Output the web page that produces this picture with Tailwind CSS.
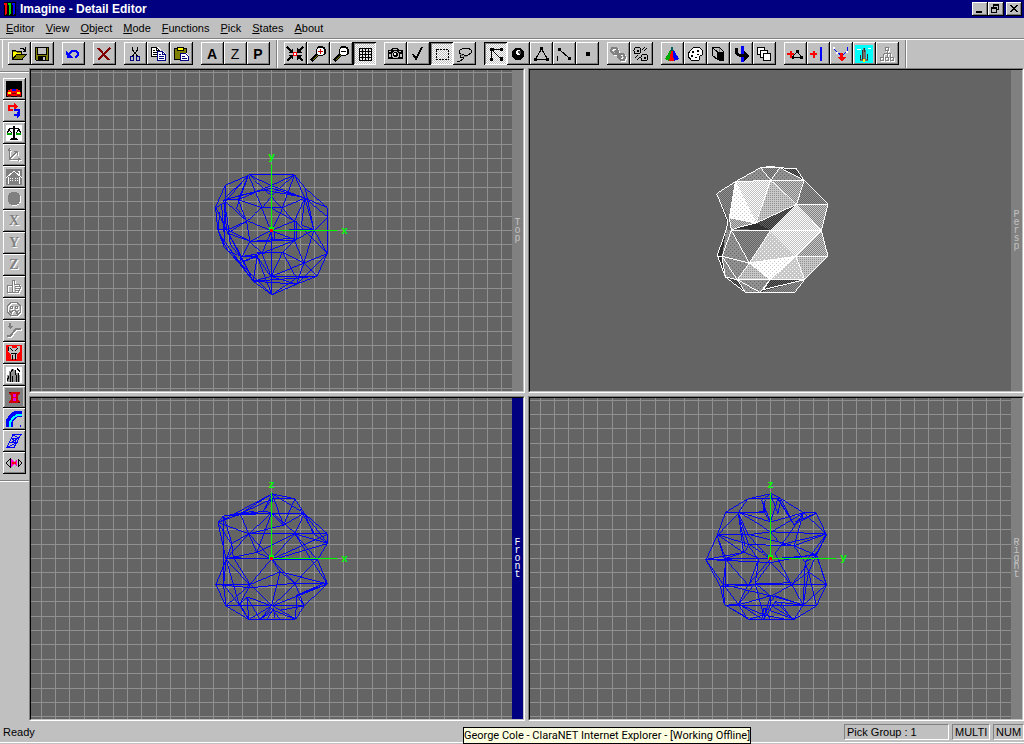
<!DOCTYPE html>
<html lang="en">
<head>
<meta charset="utf-8">
<title>Imagine - Detail Editor</title>
<script src="https://cdn.jsdelivr.net/npm/@tailwindcss/browser@4"></script>
</head>
<body class="relative flex h-screen flex-col overflow-hidden bg-[#c0c0c0] font-['Liberation_Sans',Arial,sans-serif] text-[11px] text-black">

<header class="flex h-[18px] shrink-0 items-center bg-[#000080] pl-1 pr-[2px]">
  <svg class="h-4 w-3" viewBox="0 0 12 16" shape-rendering="crispEdges" aria-hidden="true">
    <path d="M0 1h12v14H0z" fill="#000"/>
    <path d="M0 2h3v11H2v1H1V4H0z" fill="#f00"/><path d="M4 2h3v11H6v1H5V4H4z" fill="#0d0"/><path d="M8 2h3v11h-1v1H9V4H8z" fill="#00f"/>
  </svg>
  <h1 class="ml-1 flex-1 text-[12px] font-bold leading-[18px] text-white">Imagine - Detail Editor</h1>
  <button aria-label="Minimize" class="h-[14px] w-4 bg-[#c0c0c0] shadow-[inset_-1px_-1px_0_#000,inset_1px_1px_0_#fff,inset_-2px_-2px_0_#808080]"><svg class="h-[14px] w-4" viewBox="0 0 16 14" shape-rendering="crispEdges"><path d="M4 9h6v2H4z"/></svg></button>
  <button aria-label="Restore" class="h-[14px] w-4 bg-[#c0c0c0] shadow-[inset_-1px_-1px_0_#000,inset_1px_1px_0_#fff,inset_-2px_-2px_0_#808080]"><svg class="h-[14px] w-4" viewBox="0 0 16 14" shape-rendering="crispEdges"><path fill-rule="evenodd" d="M5 2h6v6H9v3H3V5h2zM6 4v1h3v2h1V4zM4 7v3h4V7z"/></svg></button>
  <button aria-label="Close" class="ml-[2px] h-[14px] w-4 bg-[#c0c0c0] shadow-[inset_-1px_-1px_0_#000,inset_1px_1px_0_#fff,inset_-2px_-2px_0_#808080]"><svg class="h-[14px] w-4" viewBox="0 0 16 14" shape-rendering="crispEdges"><path d="M4 3h2v1h1v1h2V4h1V3h2v1h-1v1h-1v1H9v1h1v1h1v1h1v1h-2V9H9V8H7v1H6v1H4V9h1V8h1V7h1V6H6V5H5V4H4z"/></svg></button>
</header>

<nav class="flex h-[21px] shrink-0 items-center gap-[11px] border-b border-[#808080] pl-[6px] text-[11px]" aria-label="Menu">
  <button><u>E</u>ditor</button>
  <button><u>V</u>iew</button>
  <button><u>O</u>bject</button>
  <button><u>M</u>ode</button>
  <button><u>F</u>unctions</button>
  <button><u>P</u>ick</button>
  <button><u>S</u>tates</button>
  <button><u>A</u>bout</button>
</nav>

<div class="flex h-[29px] shrink-0 items-start border-t border-white pl-[2px]" role="toolbar" aria-label="Tools">
  <div id="band-file" class="flex h-7 gap-2 border-l border-white pl-[5px] pr-[6px] pt-[2px]"></div>
  <div id="band-view" class="flex h-7 gap-2 border-l border-[#808080] pl-[7px] pr-[6px] pt-[2px] shadow-[inset_1px_0_0_#fff]"></div>
  <div class="h-7 w-[2px] border-l border-[#808080] bg-white"></div>
</div>

<main class="flex min-h-0 flex-1">
  <aside class="w-[29px] shrink-0 pt-[3px]">
    <div class="border-y border-[#808080] pb-[6px] pl-[3px] pt-[6px] shadow-[inset_0_1px_0_#fff,0_1px_0_#fff]">
      <div id="side" class="flex w-[23px] flex-col" role="toolbar" aria-orientation="vertical" aria-label="Object tools"></div>
    </div>
  </aside>

  <div class="grid min-w-0 flex-1 grid-cols-2 grid-rows-2 gap-[3px]">
    <section class="flex min-h-0 border border-b-white border-l-[#808080] border-r-white border-t-[#808080]" aria-label="Top view">
      <div class="flex min-w-0 flex-1 border border-b-[#c0c0c0] border-l-black border-r-[#c0c0c0] border-t-black">
        <svg class="h-full min-w-0 flex-1 bg-[#646464]" shape-rendering="crispEdges">
          <defs>
            <g id="axes" shape-rendering="geometricPrecision">
              <path d="M0-66V0M0 0H66" fill="none" stroke="#0f0" stroke-width="1"/>
              <path d="M-2.500-3.500h5v4h-5z" fill="#0f0"/><path d="M-1.500-1.500h3v3h-3z" fill="#f00"/>
            </g>
          </defs>
          <svg x="50%" y="50%" overflow="visible">
          <path class="grid-lines" fill="none" stroke="#909090"/>
          <g transform="scale(.33333) translate(-215 -257)" fill="none" stroke="#0000f5" stroke-width="3">
            <path d="M146 90H284L316 130L382 188V326L352 394L290 418L216 450L160 409L118 355L72 305L54 255L47 187L77 120Z"/>
            <path d="M146 90L77 170L47 187L80 255L54 255M77 120V165L72 305M77 120L146 90L115 165L140 228L80 255L72 165L115 165L214 122L146 90L186 188L140 228L150 290L80 255L125 335L118 355M146 90L214 152L284 90L214 122L315 160L284 90M284 90L248 188L214 152L186 188H248L315 160L382 215L342 255L315 160L284 228L248 188L214 257L186 188L115 165M72 165L186 135L300 155M77 155L146 90M72 165L214 130L316 160M72 165L80 255L160 409M60 200L54 255L85 320L125 335M65 180L75 290L118 355M80 200L92 300L125 340M316 130L382 188L315 160L382 188V215M342 255L382 326L284 228V287L342 255H284L214 257L150 290L284 287L312 355L342 255M284 287L248 322L312 355L382 326L290 418L312 355L214 395L248 322L186 325L214 257L284 228M290 228V287L214 257L140 228L72 165M140 228L80 265L150 290L186 325L284 287M214 257V395L186 325L125 335L172 335L205 385L214 395L290 418L160 409L214 395L216 450M125 335L160 409L172 335L118 355L186 325M248 322H172M210 257L222 290M225 260V290M150 290L118 355M172 335L216 450L290 400L352 394L312 355M214 395L352 394M80 255L150 290L284 280M342 255L312 355M315 160L305 240L342 255L316 130M160 409L290 400L248 322M60 270L160 409M72 305L216 450M214 152V190L284 228M146 90L110 190L140 228M284 287V228"/>
          </g>
          <use href="#axes"/>
          <g fill="#00ff00" class="font-['Liberation_Mono',monospace] text-[11px] font-bold" text-anchor="middle"><text y="-71">y</text><text x="73" y="3">x</text></g>
        </svg></svg>
        <div class="flex w-[11px] shrink-0 items-center justify-center bg-[#808080] text-[#c0c0c0]"><span class="w-[6px] break-all font-['Liberation_Mono',monospace] text-[10px] leading-[8px]">Top</span></div>
      </div>
    </section>

    <section class="flex min-h-0 border border-b-white border-l-[#808080] border-r-white border-t-[#808080]" aria-label="Perspective view">
      <div class="flex min-w-0 flex-1 border border-b-[#c0c0c0] border-l-black border-r-[#c0c0c0] border-t-black">
        <svg class="h-full min-w-0 flex-1 bg-[#646464]" shape-rendering="crispEdges">
          <defs>
            <pattern id="d1" width="6" height="6" patternUnits="userSpaceOnUse"><path fill="#646464" d="M0 0h6v6H0z"/><path fill="#303030" d="M0 0h3v3H0zM3 3h3v3H3z"/></pattern>
            <pattern id="d2" width="12" height="12" patternUnits="userSpaceOnUse"><path fill="#909090" d="M0 0h12v12H0z"/><path fill="#646464" d="M0 0h3v3H0zM6 6h3v3H6z"/></pattern>
            <pattern id="d3" width="6" height="6" patternUnits="userSpaceOnUse"><path fill="#909090" d="M0 0h6v6H0z"/><path fill="#646464" d="M0 0h3v3H0zM3 3h3v3H3z"/></pattern>
            <pattern id="d4" width="6" height="6" patternUnits="userSpaceOnUse"><path fill="#c8c8c8" d="M0 0h6v6H0z"/><path fill="#808080" d="M0 0h3v3H0zM3 3h3v3H3z"/></pattern>
            <pattern id="d5" width="6" height="6" patternUnits="userSpaceOnUse"><path fill="#c8c8c8" d="M0 0h6v6H0z"/><path fill="#909090" d="M0 0h3v3H0z"/></pattern>
            <pattern id="d6" width="6" height="6" patternUnits="userSpaceOnUse"><path fill="#fff" d="M0 0h6v6H0z"/><path fill="#c0c0c0" d="M0 0h3v3H0zM3 3h3v3H3z"/></pattern>
            <pattern id="d7" width="12" height="12" patternUnits="userSpaceOnUse"><path fill="#fff" d="M0 0h12v12H0z"/><path fill="#c8c8c8" d="M0 0h3v3H0zM6 6h3v3H6z"/></pattern>
            <pattern id="d8" width="12" height="12" patternUnits="userSpaceOnUse"><path fill="#c8c8c8" d="M0 0h12v12H0z"/><path fill="#fff" d="M0 0h3v3H0zM6 6h3v3H6z"/></pattern>
          </defs>
          <svg x="50%" y="50%" overflow="visible"><g transform="scale(.33333) translate(-211.500 -226.500)">
            <path fill="url(#d2)" d="M106 80L182 38L212 76ZM240 38L312 76H212ZM94 226L66 304L148 324ZM66 304L148 324L112 374ZM66 304L112 374L76 366ZM94 226L78 226L66 304ZM112 374H210L180 412L136 412Z"/>
            <path fill="url(#d3)" d="M182 38H240L212 76ZM106 80L50 116L88 188ZM94 226H212L148 324ZM312 76L384 148H290ZM314 374L284 412H180Z"/>
            <path fill="url(#d4)" d="M212 76H312L290 148ZM290 148H384L364 226ZM364 226L384 304H288ZM88 188L168 204L94 226Z"/>
            <path fill="url(#d5)" d="M212 76L290 148L168 204ZM288 304H384L314 374ZM148 324L210 374H112Z"/>
            <path fill="url(#d6)" d="M106 80L212 76L168 204ZM290 148L364 226H212ZM212 226H364L288 304Z"/>
            <path fill="url(#d7)" d="M106 80L168 204L88 188ZM148 324L288 304L210 374Z"/>
            <path fill="url(#d8)" d="M212 226L288 304L148 324ZM288 304L314 374H210Z"/>
            <path fill="url(#d1)" d="M290 148L212 226L168 204ZM210 374H314L180 412ZM240 38L290 42L312 76ZM76 366L112 374L136 412Z"/>
            <path fill="#303030" d="M106 222L168 204L212 226ZM50 116L84 210L78 180ZM52 300L66 304L76 366ZM78 226L66 304L52 300Z"/>
            <path fill="none" stroke="#fff" stroke-width="3" d="M50 116L106 80L182 38L212 34L240 38L290 42L312 76L384 148L364 226L384 304L314 374L284 412H136L76 366L52 300L78 226L84 200ZM106 80L212 76H312M182 38H240L212 76ZM240 38L312 76L290 148H384M106 80L88 188L94 226L66 304H52M106 80L168 204L212 76L290 148L168 204L88 188M290 148L212 226H94L148 324L212 226L288 304L364 226H212M290 148L364 226M384 304H288L148 324L66 304L112 374L148 324L210 374L288 304L314 374H112L76 366M112 374L180 412L210 374L190 404L314 374L284 412M112 374L136 412M94 226L106 220L168 204M76 366L66 304"/>
          </g></svg>
        </svg>
        <div class="flex w-[11px] shrink-0 items-center justify-center bg-[#808080] text-[#c0c0c0]"><span class="w-[6px] break-all font-['Liberation_Mono',monospace] text-[10px] leading-[8px]">Persp</span></div>
      </div>
    </section>

    <section class="flex min-h-0 border border-b-white border-l-[#808080] border-r-white border-t-[#808080]" aria-label="Front view">
      <div class="flex min-w-0 flex-1 border border-b-[#c0c0c0] border-l-black border-r-[#c0c0c0] border-t-black">
        <svg class="h-full min-w-0 flex-1 bg-[#646464]" shape-rendering="crispEdges"><svg x="50%" y="50%" overflow="visible">
          <path class="grid-lines" fill="none" stroke="#909090"/>
          <g transform="scale(.33333) translate(-214 -250)" fill="none" stroke="#0000f5" stroke-width="3">
            <path d="M216 56L284 71L312 114L382 176V204L352 254L382 326L312 392L286 433H146L78 392L46 328L78 250L54 142L70 122L120 116Z"/>
            <path d="M216 56L190 108L214 114L216 71H284L250 150L216 56L312 114M190 108L216 71L120 116H312L284 176L214 114L250 150L312 114L340 176H382L284 176H146L120 116L54 142L146 176L214 114L170 232L146 176L95 205L70 122L214 114M54 142L95 205L78 250L170 232L214 251H78L146 176L214 251L284 176L352 254H214L382 204L284 176L382 204L340 176L382 176L214 251L240 290L382 326L340 264L352 254M284 176L340 264L284 324L214 251L150 328L78 250L70 328V250L70 122M100 248L150 328L118 390L70 328L46 328L78 392L70 328H150L240 290L214 392L150 328L78 392H312L284 324L240 290M240 290L214 251M284 324L382 326L290 360L286 433L312 392L214 392L284 324L150 338L46 328M290 360L382 320M290 360L312 392M118 390L140 365L214 392L146 433L140 365L180 433L214 392L286 433L220 405L180 433L214 400L240 433M118 390L146 433L118 385M200 433L220 400L225 430M70 122L160 108M78 250L95 205L100 248L214 251M95 205L146 176L250 150M54 142L216 56M190 108L150 114M300 100L345 176M312 114L382 204M118 390L150 328M214 392L382 326M78 250L118 390M170 232L284 176M312 392L240 405"/>
          </g>
          <use href="#axes"/>
          <g fill="#00ff00" class="font-['Liberation_Mono',monospace] text-[11px] font-bold" text-anchor="middle"><text y="-71">z</text><text x="73" y="3">x</text></g>
        </svg></svg>
        <div class="flex w-[11px] shrink-0 items-center justify-center bg-[#000080] text-white"><span class="w-[6px] break-all font-['Liberation_Mono',monospace] text-[10px] leading-[8px]">Front</span></div>
      </div>
    </section>

    <section class="flex min-h-0 border border-b-white border-l-[#808080] border-r-white border-t-[#808080]" aria-label="Right view">
      <div class="flex min-w-0 flex-1 border border-b-[#c0c0c0] border-l-black border-r-[#c0c0c0] border-t-black">
        <svg class="h-full min-w-0 flex-1 bg-[#646464]" shape-rendering="crispEdges"><svg x="50%" y="50%" overflow="visible">
          <path class="grid-lines" fill="none" stroke="#909090"/>
          <g transform="scale(.33333) translate(-226 -250)" fill="none" stroke="#0000f5" stroke-width="3">
            <path d="M226 56L258 71L324 112H364L394 176L364 240L394 328L364 392L296 433H158L88 390L76 335L32 253L66 178L90 112L158 71Z"/>
            <path d="M158 71H258L248 115L226 56L200 75L210 110L130 112L158 71L90 112H210L226 140L130 112L226 170L324 112L226 140L248 71L296 148L324 112L258 71L296 148L364 114M200 75L226 140V170L160 178L130 112L66 178L160 178L226 170L394 176L324 112L296 212L394 176L258 208L324 112M130 112L145 232L160 208L130 120L150 215M66 178L92 250L145 232L66 178L160 208L226 251L160 178L296 212L364 240L330 262L296 212L160 208L190 250L32 253L145 232L190 250L226 251L92 250L160 328L190 250L180 325L226 262L290 328L240 232L258 208L296 212M32 253L84 328L92 250V328M226 251L364 240M32 253L226 262L364 235L394 176L330 262L340 290L364 240L330 262L324 390L340 290L394 328H84L88 390L130 388L84 328L226 362L290 328L324 390L226 362L130 388L180 325L226 362V392L240 380L324 390L290 328L340 290M76 335L290 322M84 328L76 335M88 392H364L340 290L330 262M130 388L158 433L205 420L226 392L296 433L240 380L205 433L226 362M130 388L200 433L205 400L296 433L324 390L240 362L226 380M226 251L160 328L130 388M290 328L340 264M130 388L205 420L270 433M88 390L158 430M180 325L205 420M210 402L225 433M258 385L290 433M364 114L300 140M210 75L205 110M250 71L296 148M226 170L258 208L324 112M394 180L364 235L394 328M66 178L88 250M180 325L290 328M324 390L394 328"/>
          </g>
          <use href="#axes"/>
          <g fill="#00ff00" class="font-['Liberation_Mono',monospace] text-[11px] font-bold" text-anchor="middle"><text y="-71">z</text><text x="73" y="2">y</text></g>
        </svg></svg>
        <div class="flex w-[11px] shrink-0 items-center justify-center bg-[#808080] text-[#c0c0c0]"><span class="w-[6px] break-all font-['Liberation_Mono',monospace] text-[10px] leading-[8px]">Right</span></div>
      </div>
    </section>
  </div>
</main>

<footer class="flex h-[23px] shrink-0 items-start gap-[3px] border-b border-[#c0c0c0] pt-[3px] text-[11px] leading-[14px] shadow-[inset_0_-1px_0_#fff]">
  <span class="flex-1 pl-[3px] pt-px">Ready</span>
  <span class="h-4 w-[105px] border border-b-white border-l-[#808080] border-r-white border-t-[#808080] pl-[2px]">Pick Group : 1</span>
  <span class="h-4 w-[38px] whitespace-nowrap border border-b-white border-l-[#808080] border-r-white border-t-[#808080] pl-[2px]">MULTI</span>
  <span class="h-4 w-[31px] border border-b-white border-l-[#808080] border-r-white border-t-[#808080] pl-[2px]">NUM</span>
</footer>

<div role="tooltip" class="absolute bottom-0 left-[463px] flex h-[17px] w-[288px] items-center justify-center whitespace-nowrap border border-black bg-[#ffffe1] pt-[2px] font-[Roboto,sans-serif] text-[11px]">George Cole - ClaraNET Internet Explorer - [Working Offline]</div>

<script>
// Grid lines: 14.4px pitch, snapped to whole pixels around each view's origin.
const extent = 3000;
let gridPath = '';
for (let i = -200; i <= 200; i++) {
  const p = Math.round(i * 14.4);
  gridPath += `M${p} ${-extent}V${extent}M${-extent} ${p}H${extent}`;
}
document.querySelectorAll('.grid-lines').forEach(el => el.setAttribute('d', gridPath));

const S = (d, c = '#000', w = 1) => `<path d="${d}" fill="none" stroke="${c}" stroke-width="${w}"/>`;
const F = (d, c = '#000') => `<path d="${d}" fill="${c}"/>`;
const T = t => `<span class="text-[14px] font-bold leading-[20px]">${t}</span>`;
const G = t => `<span class="font-['Liberation_Serif',serif] text-[14px] font-bold leading-[20px] text-[#808080] [text-shadow:1px_1px_0_#fff]">${t}</span>`;
const engraved = d => `<g transform="translate(1 1)">${S(d, '#fff')}</g>${S(d, '#808080')}`;
const chain = c => `<g fill="none" stroke="${c}" stroke-width="2"><path d="M2 2h4l2 3-1 3H4L1 5zM9 8h4l2 3-1 3h-3l-3-3zM5 5l7 7"/></g>`;

const bandFile = [
  [['Open', F('M1 5h4l1 1h5v3h4l-4 5H1z', '#808000') + F('M2 6h3l1 1h4v2H5l-3 3z', '#ff0') + S('M1.5 13.5v-9h3l1 1h5v3M1.5 13.5l4-5h9.500l-4 5zM9 2.500h3l2 2M14.500 1v4h-3')],
   ['Save', F('M1 1h14v14H2l-1-1z') + F('M2 2h12v12H2z', '#808000') + F('M4 2h8v6H4z', '#c0c0c0') + F('M4 10h8v5H4z') + F('M9 11h2v3H9z', '#c0c0c0') + F('M4 8h8v1H4zM3 2h1v7H3zM12 2h1v7h-1z')]],
  [['Undo', S('M4 8c2-4 9-4 9 0 0 2-1 3-3 3', '#00f', 2) + F('M1 5l1 7h6z', '#00f')]],
  [['Delete', S('M2 2l11 12M14 2L2 14', '#800000', 2)]],
  [['Cut', S('M5.500 1v3l5 6M10.500 1v3l-5 6') + S('M3.500 10.500h3v4h-3zM9.500 10.500h3v4h-3z', '#000080')],
   ['Copy', F('M1 1h7l3 3v7H1z', '#fff') + S('M1.500 10.500v-9h5l3 3v6zM6.500 1v3h3M3 4.500h2M3 6.500h5M3 8.500h5') + F('M7 5h6l3 3v7H7z', '#fff') + S('M7.500 14.500v-9h5l3 3v6zM12.500 5v3h3M9 8.500h2M9 10.500h5M9 12.500h5', '#000080')],
   ['Paste', F('M1 2h13v12H1z') + F('M2 3h11v10H2z', '#808000') + F('M4 1h7v4H4z') + F('M5 2h5v2H5z', '#ff0') + F('M7 7h6l3 3v5H7z', '#fff') + S('M7.500 14.500v-7h5l3 3v4zM9 10.500h3M9 12.500h5', '#000080')]],
  [['A', T('A')], ['Z', `<span class="text-[14px] leading-[20px]">Z</span>`], ['P', T('P')]]
];

const bandView = [
  [['Center', S('M0 1l5 5M16 1l-5 5M0 15l5-5M16 15l-5-5', '#000', 2) + F('M6 2v5H1zM10 2v5h5zM6 14V9H1zM10 14V9h5z') + F('M6 6h4v4H6z', '#f00') + F('M7 7h2v2H7z', '#fff')],
   ['Zoom in', S('M8 8l-7 7', '#000', 4) + S('M8 9l-5 5', '#808000') + F('M8 0h5v1h2v2h1v5h-1v1h-2v1H8V9H7V8H6V3h1V1h1z') + F('M8 2h5v1h1v5h-1v1H8V8H7V3h1z', '#fff') + S('M8 5.500h5M10.500 3v5', '#c00')],
   ['Zoom out', S('M8 8l-7 7', '#000', 4) + S('M8 9l-5 5', '#808000') + F('M8 0h5v1h2v2h1v5h-1v1h-2v1H8V9H7V8H6V3h1V1h1z') + F('M8 2h5v1h1v5h-1v1H8V8H7V3h1z', '#fff') + S('M8 5.500h5')],
   ['Grid', S('M2.500 2v13M5.500 2v13M8.500 2v13M11.500 2v13M14.500 2v13M2 2.500h13M2 5.500h13M2 8.500h13M2 11.500h13M2 14.500h13'), 1]],
  [['Camera', F('M1 4h3l1-2h6l1 2h3l1 1v8H1z') + F('M2 5h2v1H2zM12 5h2v1h-2zM6 3h4v1H6zM2 8h2v3H2zM13 8h2v3h-2z', '#c0c0c0') + `<circle cx="8.500" cy="8.500" r="3" stroke="#c0c0c0"/>` + F('M7 7h2v2H7z', '#fff')],
   ['Apply', S('M3 8l3 5L12 1', '#000', 2)],
   ['Box select', `<path d="M2.500 3.500h12v10h-12z" fill="none" stroke="#000" stroke-dasharray="2 1"/>`, 1],
   ['Lasso', S('M3 7l1-3 4-2h4l3 2v3l-3 2H8L5 8zM8 8l-4 1v2h3v2l-3 2H1') + S('M4 8l3 2h4', '#808080')]],
  [['Points', S('M3.500 15V3.500H15M4 4l9 9') + F('M2 2h4v3H2zM12 2h3v3h-3zM2 12h3v3H2zM12 11h3v4h-3z'), 1],
   ['Sphere', F('M5 2h6v1h1v1h1v1h1v6h-1v1h-1v1h-1v1H5v-1H4v-1H3v-1H2V5h1V4h1V3h1z') + F('M7 4h3v1h1v3h-1v1H7V8H6V5h1z', '#fff') + F('M8 5h3v3H9V7H8z', '#404040')],
   ['Faces', S('M8.500 3l6 10h-12z') + F('M7 1h3v3H7zM1 12h3v3H1zM13 12h3v3h-3z')],
   ['Edges', S('M4 4l9 8') + F('M2 2h3v3H2zM12 11h3v3h-3zM1 10h1v5H1z')],
   ['Point', F('M7 6h4v4H7z')]],
  [['Link', `<g transform="translate(1 1)">${chain('#fff')}</g>` + chain('#808080')],
   ['Unlink', `<g fill="none" stroke="#000"><circle cx="4.500" cy="4.500" r="3.500"/><circle cx="11.500" cy="11.500" r="3.500"/></g>` + S('M9 4l3-3M11 5l3-3M2 12l3-3M4 14l3-3') + F('M4 4h2v2H4zM11 11h2v2h-2z')]],
  [['Color', F('M8 1L1 13l4 2z', '#0a0') + F('M8 1L5 15h5z', '#f00') + F('M8 1l7 12-5 2z', '#00f') + F('M8 0l2 5H6z', '#006060')],
   ['Palette', `<path d="M3 5l4-4h5l3 3v5l-2 1-1 4H4l-3-4V8z" fill="#fff" stroke="#000"/>` + S('M5.500 5.500h1v1h-1zM10.500 4.500h1v1h-1zM4.500 9.500h1v1h-1zM8 11.500h2M10 8.500h2')],
   ['Cube', F('M7 6h7v9H9L7 13z') + S('M2.500 1.500h7l4 4v8h-6l-5-4zM2.500 1.500l5 4.500h6M7.500 6v8') + S('M9.500 2v4', '#808080')],
   ['Rotate', S('M9 0v16', '#00f', 3) + S('M5 3H3v4l3 2h7', '#000', 3) + F('M11 5l5 5-5 5z')],
   ['Arrange', `<g fill="#fff" stroke="#000"><path d="M1.500 1.500h7v7h-7z"/><path d="M4.500 4.500h7v7h-7z"/><path d="M7.500 7.500h7v7h-7z"/></g>`]],
  [['Add face', S('M5 11.500l5-6 5 6z') + F('M9 4h3v3H9zM13 10h3v3h-3zM5 10h2v3H5z') + S('M0 8h7M3.500 5v7', '#f00', 2)],
   ['Add line', S('M0 8h7M3.500 5v7', '#f00', 2) + S('M11 1v14', '#00f', 2)],
   ['Path', S('M1 2l3 5 5 2 5-3 1-5', '#00f') + F('M7 7h3v4h3l-4 5-5-5h3z', '#f00') + F('M0 1h2v2H0zM3 6h2v2H3zM13 5h2v2h-2z', '#fff')],
   ['Action', F('M-1-1h18v18H-1z', '#0ff') + F('M6 5l2-4 2 4v7l2 3H4l2-3z', '#707070') + S('M6.500 4v10M11.500 8v6M4.500 9v5M8.500 2v4', '#303030') + F('M1 3h4v1H1zM12 2h3v1h-3z', '#fff') + F('M7 13h2v3H7z', '#ff0')],
   ['Hierarchy', engraved('M6.500 1.500h3v3h-3zM8 5v2M4.500 7.500h7M4.500 8v3M8 8v3M11.500 8v3M1.500 11.500h3v3h-3zM6.500 11.500h3v3h-3zM11.500 11.500h3v3h-3z')]]
];

const side = [
  ['Car', F('M0 0h16v16H0z') + F('M4 8h8v1h2v2h1v4H1v-4h1V9h2z', '#f00') + F('M6 8h4v2H6z', '#00f') + F('M2 11h3v2H2zM11 11h3v2h-3z', '#ff0') + F('M2 14h3v2H2zM11 14h3v2h-3zM6 12h4v1H6z', '#800000')],
  ['Cycle', S('M9 3H3v4h4', '#f00', 2) + F('M8 0l4 3-4 4z', '#f00') + S('M8 7h5v5H8', '#00f', 2) + F('M11 9v6l4-3z', '#00f')],
  ['Balance', F('M0 0h16v16H0z', '#fff') + S('M8 1v13', '#000', 2) + S('M3 3.500h10M4 14.500h8M3 4L1 9M3 4l3 5M13 4l-3 5M13 4l2 5M5 13.500h6') + F('M1 8h5v2H1zM10 8h5v2h-5z', '#0a0')],
  ['Axes', engraved('M3.500 2v10.500H14M3.500 12l8-8M8 4.500h3v3M2 4l1.500-2L5 4M12 11l2 1.500-2 1.500')],
  ['House', F('M0 0h16v16H0z', '#808080') + S('M0 9l8-7 8 7M2.500 8v7M13.500 8v7M11.500 2.500h2v3', '#fff') + F('M4 9h1v1H4zM6 9h1v1H6zM4 11h1v1H4zM6 11h1v1H6zM9 9h1v1H9zM11 9h1v1h-1zM9 11h1v1H9zM11 11h1v1h-1z', '#fff')],
  ['Disc', F('M6 2h5v1h2v2h2v7h-2v2h-2v1H6z', '#fff') + F('M5 1h6v1h2v2h1v7h-1v2h-2v1H5v-1H3v-2H2V4h1V2h2z', '#808080')],
  ['X', G('X')], ['Y', G('Y')], ['Z', G('Z')],
  ['Thumb', engraved('M1.500 6.500h5v-5h2v4h5v2h1v2h-1v2h-1v2h-11zM6.500 6v7M9 7.500h5M9 9.500h5M9 11.500h4')],
  ['Mask', engraved('M5 1.500h6l3.500 3.500v6L11 14.500H5L1.500 11V5zM4.500 5.500h2v2h-2zM9.500 5.500h2v2h-2zM5 11l3-2 3 2v2M3 9l3 4M13 9l-3 4')],
  ['Slide', `<g transform="translate(1 1)">${S('M1 13h3l6-7h5', '#fff', 2)}</g>` + S('M1 13h3l6-7h5', '#808080', 2) + F('M3 0h2v3h2L4 6 1 3h2z', '#808080')],
  ['Creature', F('M0 0h16v16H0z', '#f00') + F('M3 1h3v2h5V1h3v5l-3 3v5H5v-4L2 6z', '#c0c0c0') + S('M4 3l3 3M12 3L9 6M5 8.500h6M6.500 10v5M9.500 9v6M2.500 2v4')],
  ['Hands', F('M0 0h16v16H0z', '#fff') + F('M5 2h3v1h2v3h2v2h2v7H1V8h2V4h2z', '#909090') + S('M4 15V7l3-5M9 3l1 5v7M12 6l1 9M1 14l2-5M6.500 9v6M11 1l3 4')],
  ['Hourglass', F('M-1-1h18v18H-1z', '#808080') + F('M3 3h11v2l-2 1v5l2 1v2H3v-2l2-1V6L3 5z', '#d00000') + F('M7 5h3v7H7z', '#e000e0') + F('M7 8h3v1H7z', '#f00') + F('M3 3h2v1H3zM12 13h2v1h-2z', '#600')],
  ['Arc', F('M0 16V9l4-6 5-3h7v6h-5l-4 4v6z', '#00f') + S('M4 16v-5l3-4 4-3h5', '#0ff', 2) + F('M14 14h1v2h-1z', '#00f')],
  ['Truss', S('M7 1.500h8L8 14.500H1zM5 5.500h8M3 9.500h8M7 2l6 3-8 4.500M5 5l6 4.500-10 5', '#00f')],
  ['Mirror', S('M0 8l4-4v8zM16 8l-4-4v8z') + F('M5 4l3 3 3-3v8l-3-3-3 3z', '#f0c') + F('M6 7h4v2H6z', '#f00')]
];

const icon = body => body.startsWith('<span') ? body :
  `<svg class="h-4 w-4 shrink-0" viewBox="0 0 16 16" overflow="visible" shape-rendering="crispEdges">${body}</svg>`;
const raised = 'flex h-[23px] w-[23px] items-center justify-center pr-px shadow-[inset_-1px_-1px_0_#000,inset_1px_1px_0_#fff,inset_-2px_-2px_0_#808080]';
const pressed = 'flex h-[23px] w-[23px] items-center justify-center pl-px pt-px shadow-[inset_1px_1px_0_#000,inset_-1px_-1px_0_#fff,inset_2px_2px_0_#808080] bg-[repeating-conic-gradient(#fff_0_25%,#c0c0c0_0_50%)] bg-[length:2px_2px]';
const sideBtn = 'flex h-[22px] w-[23px] items-center justify-center pr-px shadow-[inset_-1px_-1px_0_#000,inset_1px_1px_0_#fff,inset_-2px_-2px_0_#808080]';
const button = cls => ([name, body, on]) =>
  `<button class="${on ? pressed : cls}" title="${name}" aria-label="${name}"${on ? ' aria-pressed="true"' : ''}>${icon(body)}</button>`;
const groups = list => list.map(g => `<div class="flex">${g.map(button(raised)).join('')}</div>`).join('');
document.getElementById('band-file').innerHTML = groups(bandFile);
document.getElementById('band-view').innerHTML = groups(bandView);
document.getElementById('side').innerHTML = side.map(button(sideBtn)).join('');
</script>
</body>
</html>
